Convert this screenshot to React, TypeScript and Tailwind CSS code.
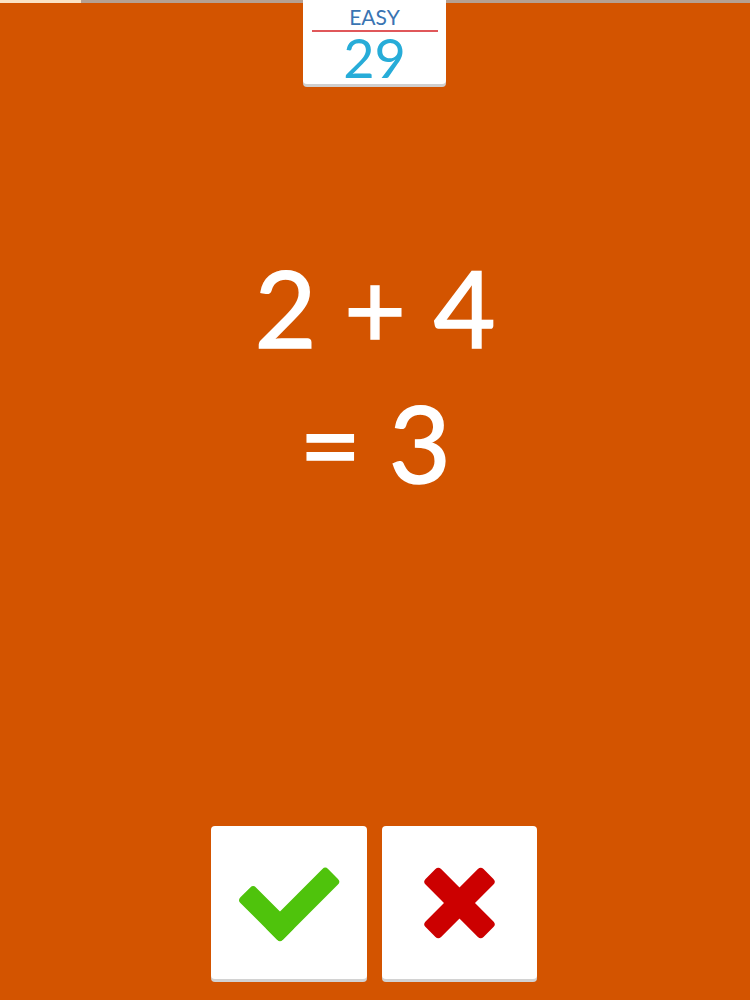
import React from "react";

const font = { fontFamily: "Lato, 'Open Sans', sans-serif" };

function CheckIcon() {
  return (
    <svg width="156" height="156" viewBox="0 0 156 156">
      <g fill="#4fc30c">
        <rect x="-11" y="-11" width="86" height="22" rx="4" transform="translate(69 102) rotate(-45)" />
        <rect x="-11" y="-11" width="60" height="22" rx="4" transform="translate(69 102) rotate(-135)" />
      </g>
    </svg>
  );
}

function CrossIcon() {
  return (
    <svg width="155" height="156" viewBox="0 0 155 156">
      <g fill="#cc0000">
        <rect x="-41" y="-11" width="82" height="22" rx="4" transform="translate(77.5 78) rotate(45)" />
        <rect x="-41" y="-11" width="82" height="22" rx="4" transform="translate(77.5 78) rotate(-45)" />
      </g>
    </svg>
  );
}

export default function App() {
  return (
    <div className="relative flex h-[1000px] w-[750px] flex-col items-center bg-[#d35400]" style={font}>
      {/* progress bar */}
      <div className="absolute left-0 top-0 flex h-[3px] w-full bg-[#b5a092]">
        <div className="h-full w-[81px] bg-[#fbe3c4]" />
      </div>

      {/* level badge */}
      <div className="relative z-10 ml-[-1px] flex h-[84px] w-[143px] flex-col items-center rounded-b-[4px] bg-white shadow-[0_3px_0_#cfcfcf]">
        <div className="mt-[6px] text-[21px] leading-[22px] text-[#3a74b2]">EASY</div>
        <div className="mt-[2px] h-[2px] w-[126px] bg-[#e0575a]" />
        <div className="mt-[1px] text-[54px] leading-[50px] text-[#27acd8]">29</div>
      </div>

      {/* equation */}
      <div className="mt-[155px] flex flex-col items-center text-[107px] leading-[135px] text-white [-webkit-text-stroke:1.5px_white]">
        <div className="whitespace-pre">2 + 4</div>
        <div className="whitespace-pre">= 3</div>
      </div>

      {/* answer buttons */}
      <div className="mt-auto mb-[21px] ml-[-2px] flex gap-[15px]">
        <button className="flex h-[153px] w-[156px] items-center justify-center overflow-hidden rounded-[4px] bg-white shadow-[0_3px_0_#d2d2d2]">
          <CheckIcon />
        </button>
        <button className="flex h-[153px] w-[155px] items-center justify-center overflow-hidden rounded-[4px] bg-white shadow-[0_3px_0_#d2d2d2]">
          <CrossIcon />
        </button>
      </div>
    </div>
  );
}
